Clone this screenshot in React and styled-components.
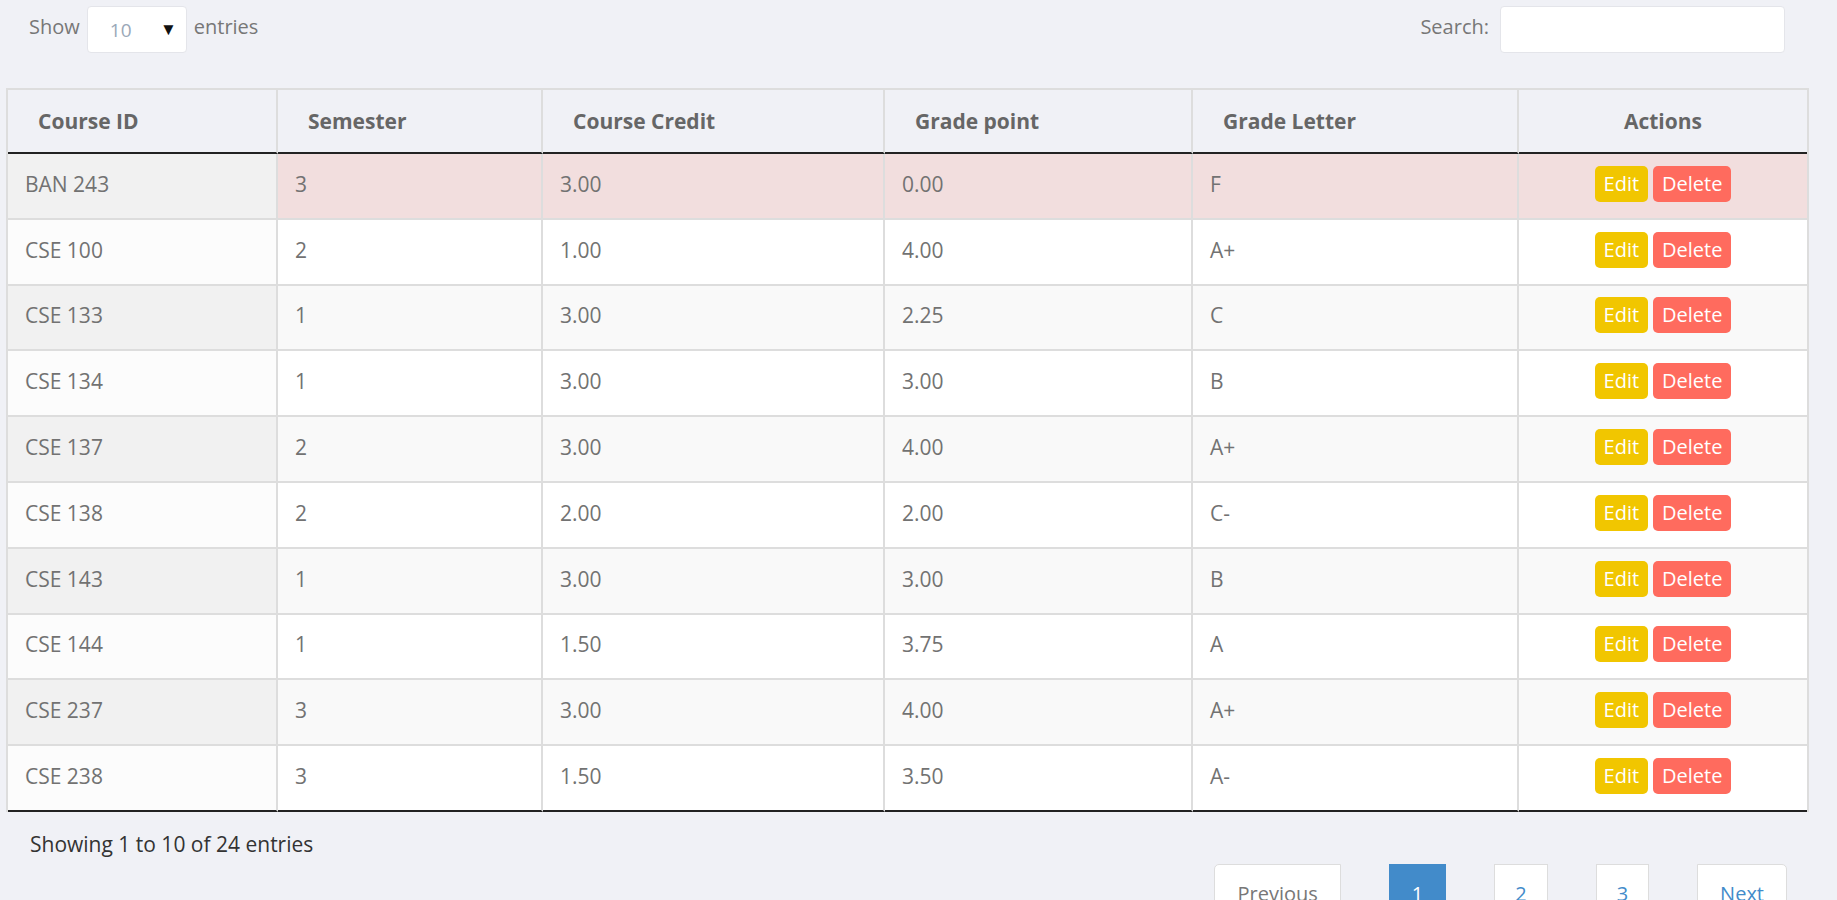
import React from "react";
import styled, { createGlobalStyle } from "styled-components";

const GlobalStyle = createGlobalStyle`
  * { box-sizing: border-box; }
  html, body {
    margin: 0;
    padding: 0;
    background: #f0f1f6;
    overflow: hidden;
    font-family: "Open Sans", "Liberation Sans", sans-serif;
  }
`;

const courses = [
  { id: "BAN 243", sem: 3, credit: "3.00", point: "0.00", letter: "F", failed: true },
  { id: "CSE 100", sem: 2, credit: "1.00", point: "4.00", letter: "A+" },
  { id: "CSE 133", sem: 1, credit: "3.00", point: "2.25", letter: "C" },
  { id: "CSE 134", sem: 1, credit: "3.00", point: "3.00", letter: "B" },
  { id: "CSE 137", sem: 2, credit: "3.00", point: "4.00", letter: "A+" },
  { id: "CSE 138", sem: 2, credit: "2.00", point: "2.00", letter: "C-" },
  { id: "CSE 143", sem: 1, credit: "3.00", point: "3.00", letter: "B" },
  { id: "CSE 144", sem: 1, credit: "1.50", point: "3.75", letter: "A" },
  { id: "CSE 237", sem: 3, credit: "3.00", point: "4.00", letter: "A+" },
  { id: "CSE 238", sem: 3, credit: "1.50", point: "3.50", letter: "A-" },
];

const columns = [
  { label: "Course ID", width: 270 },
  { label: "Semester", width: 265 },
  { label: "Course Credit", width: 342 },
  { label: "Grade point", width: 308 },
  { label: "Grade Letter", width: 326 },
  { label: "Actions", width: 288, center: true },
];

const App = () => {
  return (
    <>
      <GlobalStyle />
      <Page>
        <TopBar>
          <Label>
            <LabelText>Show</LabelText>
            <Select>
              <span>10</span>
              <Arrow>▼</Arrow>
            </Select>
            <LabelText>entries</LabelText>
          </Label>
          <Label>
            <LabelText>Search:</LabelText>
            <SearchInput type="text" />
          </Label>
        </TopBar>

        <Table>
          <colgroup>
            {columns.map((c) => (
              <col key={c.label} style={{ width: c.width }} />
            ))}
          </colgroup>
          <thead>
            <tr>
              {columns.map((c) => (
                <Th key={c.label} center={c.center}>
                  {c.label}
                </Th>
              ))}
            </tr>
          </thead>
          <tbody>
            {courses.map((c, i) => (
              <Row key={c.id} striped={i % 2 === 0} failed={c.failed}>
                <SortedCell striped={i % 2 === 0}>{c.id}</SortedCell>
                <Td>{c.sem}</Td>
                <Td>{c.credit}</Td>
                <Td>{c.point}</Td>
                <Td>{c.letter}</Td>
                <Td>
                  <Actions>
                    <ActionButton kind="edit">Edit</ActionButton>
                    <ActionButton kind="delete">Delete</ActionButton>
                  </Actions>
                </Td>
              </Row>
            ))}
          </tbody>
        </Table>

        <Footer>
          <Info>Showing 1 to 10 of 24 entries</Info>
          <Pager>
            <PageButton disabled first>Previous</PageButton>
            <PageButton active>1</PageButton>
            <PageButton narrow>2</PageButton>
            <PageButton narrow>3</PageButton>
            <PageButton last>Next</PageButton>
          </Pager>
        </Footer>
      </Page>
    </>
  );
};

export default App;

const Page = styled.div`
  padding: 6px 27px 0 6px;
  width: 1837px;
  height: 900px;
`;

const TopBar = styled.div`
  display: flex;
  justify-content: space-between;
  align-items: center;
  padding: 0 25px 0 23px;
  height: 47px;
`;

const Label = styled.label`
  display: flex;
  align-items: center;
  gap: 7px;
  font-size: 20px;
  color: #777;
`;

const LabelText = styled.span`
  padding-bottom: 7px;
`;

const Select = styled.div`
  display: flex;
  align-items: center;
  justify-content: space-between;
  width: 100px;
  height: 47px;
  padding: 0 9px 0 22px;
  background: #fff;
  border: 1px solid #e4e5ea;
  border-radius: 4px;
  font-size: 19px;
  color: #9aa8b8;
`;

const Arrow = styled.span`
  font-size: 17px;
  color: #111;
  padding-bottom: 3px;
`;

const SearchInput = styled.input`
  width: 285px;
  height: 47px;
  margin-left: 4px;
  border: 1px solid #e4e5ea;
  border-radius: 4px;
  background: #fff;
  outline: none;
`;

const Table = styled.table`
  margin-top: 35px;
  width: 1803px;
  table-layout: fixed;
  border-spacing: 0;
  border: 2px solid #ddd;
  border-bottom: none;
  font-size: 21px;
`;

const Th = styled.th`
  padding: 16px 30px;
  line-height: 30px;
  text-align: ${(p) => (p.center ? "center" : "left")};
  font-weight: 700;
  color: #666;
  border-right: 2px solid #ddd;
  border-bottom: 2px solid #222;
  &:last-child { border-right: none; }
`;

const Row = styled.tr`
  background: ${(p) => (p.failed ? "#f2dede" : p.striped ? "#f9f9f9" : "#fff")};
  &:last-child td { border-bottom-color: #222; }
`;

const Td = styled.td`
  height: 65.8px;
  padding: 0 17px 4px;
  line-height: 30px;
  vertical-align: middle;
  color: #727272;
  border-right: 2px solid #ddd;
  border-bottom: 2px solid #ddd;
  white-space: nowrap;
  &:last-child { border-right: none; }
`;

const SortedCell = styled(Td)`
  background: ${(p) => (p.striped ? "#f1f1f1" : "#fcfcfc")};
`;

const Actions = styled.div`
  display: flex;
  justify-content: center;
  gap: 5px;
`;

const ActionButton = styled.button`
  font-family: inherit;
  font-size: 20px;
  line-height: 28px;
  padding: 4px 9px;
  border: none;
  border-radius: 5px;
  color: #fff;
  background: ${(p) => (p.kind === "edit" ? "#f1c600" : "#ff6b5e")};
`;

const Footer = styled.div`
  display: flex;
  justify-content: space-between;
  align-items: flex-start;
  padding: 0 23px 0 24px;
`;

const Info = styled.div`
  margin-top: 17px;
  font-size: 21px;
  line-height: 30px;
  color: #333;
`;

const Pager = styled.div`
  display: flex;
  gap: 48px;
  margin-top: 52px;
`;

const PageButton = styled.button`
  font-family: inherit;
  font-size: 20px;
  line-height: 30px;
  padding: 14px ${(p) => (p.narrow ? "20px" : "22px")};
  background: ${(p) => (p.active ? "#428bca" : "#fff")};
  color: ${(p) => (p.active ? "#fff" : p.disabled ? "#777" : "#428bca")};
  border: 1px solid ${(p) => (p.active ? "#428bca" : "#ddd")};
  border-radius: ${(p) => (p.first ? "5px 0 0 5px" : p.last ? "0 5px 5px 0" : "0")};
`;
